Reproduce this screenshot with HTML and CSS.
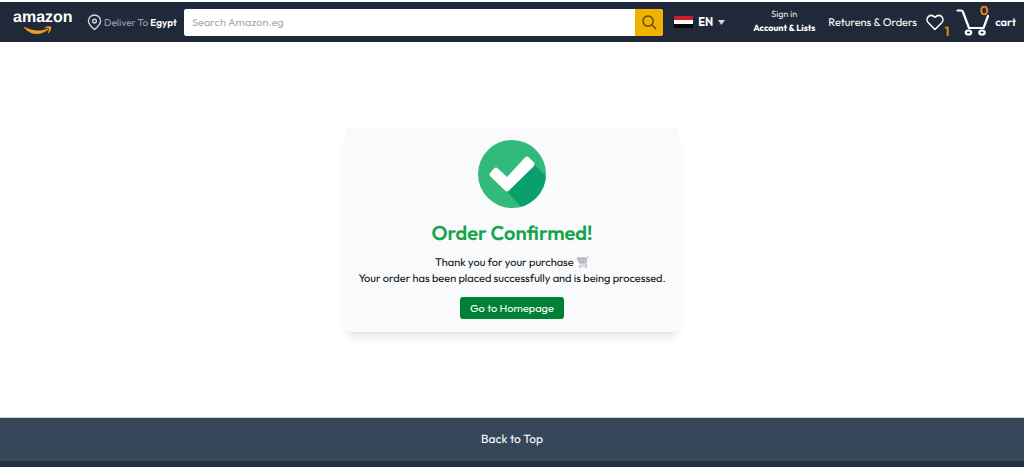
FILE: index.html
```html
<!DOCTYPE html>
<html lang="en">
<head>
<meta charset="utf-8">
<meta name="viewport" content="width=device-width, initial-scale=1">
<title>Order Confirmed</title>
<link rel="stylesheet" href="styles.css">
</head>
<body>
<header class="navbar">
  <a class="logo" href="#" aria-label="amazon home">
    <span class="logo-text">amazon</span>
    <svg class="logo-smile" viewBox="0 0 34 11" aria-hidden="true"><path d="M0 1C9 6 20 7 29 3l1 1C21 12 8 12 0 2z"/><path d="M25 2c3-2 7-2 8-1 1 2-1 6-3 8l-1-1c1-2 2-4 1-5-1-1-3-1-5 0z"/></svg>
  </a>
  <a class="deliver" href="#">
    <svg class="pin" viewBox="0 0 16 18" aria-hidden="true"><path d="M8 16.500C4 13 1.500 10.500 1.500 7.300a6.500 6.300 0 0 1 13 0C14.500 10.500 12 13 8 16.500z"/><circle cx="8" cy="7.500" r="2"/></svg>
    <span>Deliver To <strong>Egypt</strong></span>
  </a>
  <form class="search" role="search">
    <input class="search-input" type="text" placeholder="Search Amazon.eg" aria-label="Search Amazon.eg">
    <button class="search-button" type="button" aria-label="Search">
      <svg viewBox="0 0 16 16" aria-hidden="true"><circle cx="6.500" cy="6.500" r="5.500"/><path d="M10.500 10.500L15 15"/></svg>
    </button>
  </form>
  <button class="language" type="button">
    <svg class="flag" viewBox="0 0 19 12" aria-hidden="true"><path fill="#ce1a2b" d="M0 0h19v4H0z"/><path fill="#fff" d="M0 4h19v4H0z"/><path fill="#080808" d="M0 8h19v4H0z"/><path fill="#f3dcae" d="M9 5h1v2H9z"/></svg>
    <span>EN</span>
    <svg class="caret" viewBox="0 0 7 5" aria-hidden="true"><path d="M0 0h7L3.500 5z"/></svg>
  </button>
  <a class="account" href="#"><span>Sign in</span><strong>Account &amp; Lists</strong></a>
  <a class="orders" href="#">Returens &amp; Orders</a>
  <a class="wishlist" href="#" aria-label="Wishlist, 1 item">
    <svg viewBox="0 0 18 17" aria-hidden="true"><path d="M9 15.500L2.300 8.700C-1.500 4.500 4-1.500 9 3.300 14-1.500 19.500 4.500 15.700 8.700z"/></svg>
    <span class="badge wishlist-badge">1</span>
  </a>
  <a class="cart" href="#">
    <span class="cart-icon">
      <svg viewBox="0 0 34 27" aria-hidden="true"><path d="M1.500 1.500H5q1.500 0 2 1.500L13 19h14.500L32 7"/><ellipse cx="12.500" cy="23.500" rx="2.700" ry="2"/><ellipse cx="26" cy="23.500" rx="2.700" ry="2"/></svg>
      <span class="badge cart-badge">0</span>
    </span>
    <strong>cart</strong>
  </a>
</header>
<main class="content">
  <section class="card">
    <svg class="check" viewBox="0 0 68 68" aria-hidden="true">
      <defs><clipPath id="disc"><circle cx="34" cy="34" r="34"/></clipPath></defs>
      <g clip-path="url(#disc)"><path fill="#32ba7c" d="M0 0h68v68H0z"/><path fill="#0aa06e" d="M28 50.500L55 23l17 17v32H48z"/></g>
      <path fill="#fff" d="M12.500 36.500q-2-2 0-4l3.500-4q2-2 4 0l9 8.500L47 17.500q2-2 4 0l4.500 4.500q2 2 0 4.500L31 50.500q-2 2-4 0z"/>
    </svg>
    <h1 class="title">Order Confirmed!</h1>
    <p class="message">Thank you for your purchase
      <svg class="trolley" viewBox="0 0 12 12" role="img" aria-label="shopping cart"><path class="basket" d="M0 2h9L8 7H2z"/><path d="M0 2h9M1 4h8M2 6h6M3 8h6l1-7h2M3 2l1 5M6 2v5M9 8l1 2H2"/><circle cx="3" cy="11" r=".8"/><circle cx="9" cy="11" r=".8"/></svg>
      <br>Your order has been placed successfully and is being processed.</p>
    <button class="home-button" type="button">Go to Homepage</button>
  </section>
</main>
<footer class="footer">
  <a class="back-to-top" href="#">Back to Top</a>
  <div class="footer-body"></div>
</footer>
</body>
</html>
```
FILE: styles.css
```css
* { box-sizing: border-box; }
body {
  margin: 0;
  min-height: 100vh;
  display: flex;
  flex-direction: column;
  font-family: Outfit, Lato, sans-serif;
  font-size: 11px;
  color: #111;
  background: #fff;
  text-rendering: geometricPrecision;
}
a { color: inherit; text-decoration: none; }
button, input { font: inherit; border: 0; margin: 0; padding: 0; }
svg { display: block; fill: none; flex-shrink: 0; }
strong { font-weight: 600; }

.navbar {
  display: flex;
  align-items: center;
  margin-top: 2px;
  padding: 0 8px 0 13px;
  height: 40px;
  background: #1f2939;
  color: #fff;
  white-space: nowrap;
}
.logo { display: flex; flex-direction: column; width: 60px; margin-right: 14px; }
.logo-text { font: 700 16px/18px "Liberation Sans", sans-serif; }
.logo-smile { width: 34px; height: 9px; margin: -1px 0 0 8px; fill: #f39a1c; }
.deliver { display: flex; align-items: center; gap: 2px; width: 86px; margin-right: 11px; color: #99a1af; font-size: 10px; }
.deliver strong { color: #fff; }
.pin { width: 15px; height: 17px; stroke: #d1d5dc; stroke-width: 1.5; }
.search { display: flex; flex: 1; height: 27px; border-radius: 3px; overflow: hidden; background: #fff; }
.search-input { flex: 1; min-width: 0; padding: 0 8px; color: #222; background: #fff; }
.search-input::placeholder { color: #aaa; opacity: 1; }
.search-button { display: grid; place-items: center; width: 28px; background: #f0b100; }
.search-button svg { width: 15px; height: 15px; stroke: #594510; stroke-width: 1.5; overflow: visible; }
.language { display: flex; align-items: center; gap: 5px; width: 52px; margin: 0 26px 0 11px; color: #fff; background: none; font-weight: 700; }
.flag { width: 19px; height: 12px; }
.caret { width: 7px; height: 5px; fill: #d1d5dc; }
.account { display: flex; flex-direction: column; align-items: center; width: 64px; margin-right: 12px; font-size: 9px; line-height: 14px; }
.account span { color: #e5e7eb; }
.account strong { font-weight: 700; }
.orders { width: 88px; margin-right: 10px; }
.wishlist { position: relative; width: 18px; margin-right: 12px; }
.wishlist svg { width: 18px; height: 17px; stroke: #fff; stroke-width: 1.5; }
.badge { position: absolute; color: #f58b16; font-weight: 600; font-size: 13px; line-height: 12px; }
.wishlist-badge { right: -5px; bottom: -7px; }
.cart { display: flex; align-items: center; gap: 5px; }
.cart-icon { position: relative; }
.cart-icon svg { width: 34px; height: 27px; stroke: #fff; stroke-width: 2.2; stroke-linecap: round; stroke-linejoin: round; }
.cart-badge { right: 2px; top: -4px; }

.content { flex: 1; display: grid; place-items: center; padding: 16px; }
.card {
  display: flex;
  flex-direction: column;
  align-items: center;
  padding: 13px 12px;
  border-radius: 5px;
  background: #f8fafc;
  box-shadow: 0 7px 10px -2px #0000001a, 0 2px 4px -3px #0000001a;
}
.check { width: 68px; height: 68px; }
.title { margin: 12px 0 6px; color: #16a34a; font-size: 20px; line-height: 28px; font-weight: 600; }
.message { margin: 0; text-align: center; font-size: 11px; line-height: 16px; }
.trolley { display: inline-block; width: 12px; height: 12px; margin-left: 1px; vertical-align: -2px; stroke: #aaaab0; stroke-width: .7; }
.basket { fill: #d8d8dd; }
.home-button { margin-top: 11px; padding: 0 10px; height: 22px; border-radius: 3px; color: #fff; background: #008236; }

.footer { border-top: 1px solid #cbd1d8; }
.back-to-top { display: block; text-align: center; color: #fff; background: #37475a; font-size: 12px; line-height: 43px; }
.footer-body { height: 6px; background: #232f3e; }
```
